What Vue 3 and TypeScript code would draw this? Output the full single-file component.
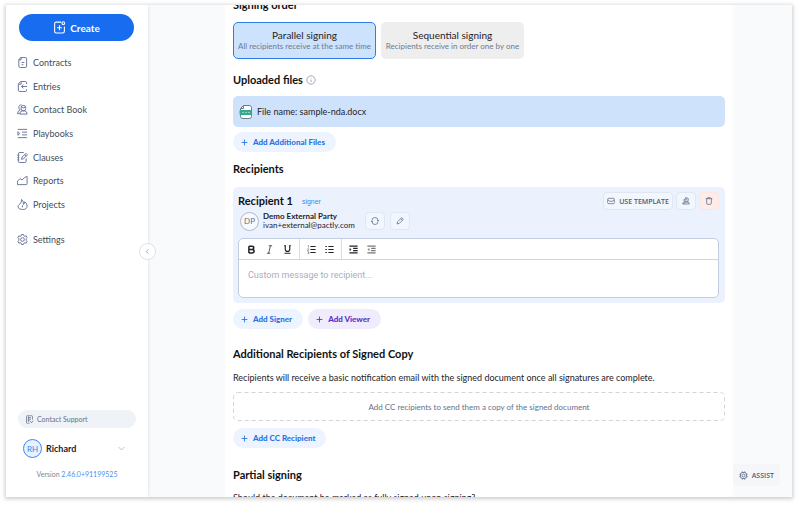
<script setup lang="ts">
import { ref } from 'vue'

interface NavItem {
  label: string
  icon: string[]
}

const nav: NavItem[] = [
  { label: 'Contracts', icon: ['M8 1h10q3 0 3 3v16q0 3-3 3H7q-3 0-3-3V6z', 'M9 1v5H4', 'M10 12h6M10 17h4'] },
  { label: 'Entries', icon: ['M21 7V4q0-3-3-3H8L3 6v14q0 3 3 3h12q3 0 3-3v-2', 'M9 1v6H3', 'M22 12H10M14 8l-4 4 4 4'] },
  { label: 'Contact Book', icon: ['M14 3a5 5 0 0 1 5 5v2a5 5 0 0 1-10 0V8a5 5 0 0 1 5-5z', 'M6 22q0-6 5-7h6q5 1 5 7z', 'M10 2a5 5 0 0 0-6 5q0 4 3 6-5 1-6 8h4', 'M10 7q4 3 8 0'] },
  { label: 'Playbooks', icon: ['M2 8v8l4-4zM2 3h20M11 9h11M11 15h11M2 21h20'] },
  { label: 'Clauses', icon: ['M20 14v6q0 3-3 3H6q-3 0-3-3V4q0-3 3-3h9', 'M1 7h4M1 12h4M1 17h4', 'M10 16l1-5 9-8 3 3-9 9zM17 6l3 3'] },
  { label: 'Reports', icon: ['M1 21v-8l6-5 4 3 5-5 6-3v16q0 2-2 2z'] },
  { label: 'Projects', icon: ['M10 1q1 6-4 10-4 3-4 6 1 6 10 6 10 0 10-8 0-5-5-9 0 4-3 6 1-7-4-11z', 'M12 14v4'] },
]

const gear =
  'M10 1h4l1 3 2 1 3-1 2 4-2 2v4l2 2-2 4-3-1-2 1-1 3h-4l-1-3-2-1-3 1-2-4 2-2v-4L2 8l2-4 3 1 2-1z'

const order = ref<'parallel' | 'sequential'>('parallel')
const message = ref('')
</script>

<template>
  <div class="window">
    <aside class="sidebar">
      <button class="create" type="button">
        <svg class="ico create-ico" viewBox="0 0 24 24"><path d="M15 2H6Q3 2 3 5v14q0 3 3 3h12q3 0 3-3V10M12 8v9M7.500 12.500h9" /><circle cx="19" cy="4" r="2.500" /></svg>
        <span>Create</span>
      </button>
      <nav class="nav">
        <div class="nav-list">
          <a v-for="item in nav" :key="item.label" href="#" class="nav-link">
            <svg class="ico" viewBox="0 0 24 24"><path v-for="d in item.icon" :key="d" :d="d" /></svg>
            <span>{{ item.label }}</span>
          </a>
        </div>
        <a href="#" class="nav-link settings">
          <svg class="ico" viewBox="0 0 24 24"><path :d="gear" /><circle cx="12" cy="12" r="4" /></svg>
          <span>Settings</span>
        </a>
      </nav>
      <div class="foot">
        <a href="#" class="support">
          <svg class="ico" viewBox="0 0 24 24"><path d="M20 12V4q0-2-2-2H6Q4 2 4 4v16q0 2 2 2h6M8 7h8M8 11h8M8 15h4M14 16l3 5 5-6M9 4v14" /></svg>
          <span>Contact Support</span>
        </a>
        <button class="user" type="button">
          <span class="avatar blue">RH</span>
          <span class="user-name">Richard</span>
          <svg class="ico chev" viewBox="0 0 24 24"><path d="M2 7l10 10L22 7" /></svg>
        </button>
        <p class="version">Version <a href="#">2.46.0+91199525</a></p>
      </div>
      <button class="collapse" type="button" aria-label="Collapse">
        <svg class="ico" viewBox="0 0 24 24"><path d="M15 5l-7 7 7 7" /></svg>
      </button>
    </aside>

    <main class="main">
      <div class="panel">
        <h2 class="first">Signing order</h2>
        <div class="orders">
          <button type="button" class="order" :class="{ on: order === 'parallel' }" @click="order = 'parallel'">
            <span class="order-title">Parallel signing</span>
            <span class="order-sub">All recipients receive at the same time</span>
          </button>
          <button type="button" class="order" :class="{ on: order === 'sequential' }" @click="order = 'sequential'">
            <span class="order-title">Sequential signing</span>
            <span class="order-sub">Recipients receive in order one by one</span>
          </button>
        </div>

        <h2 class="files-title">
          Uploaded files
          <svg class="ico info" viewBox="0 0 24 24"><circle cx="12" cy="12" r="10" /><path d="M12 11v6M12 6.500v1.500" /></svg>
        </h2>
        <div class="file">
          <svg class="file-ico" viewBox="0 0 14 14">
            <path d="M4.500 0.500H10q2.500 0 2.500 2v9q0 2-2.500 2H4q-2.500 0-2.500-2v-8z" fill="#fff" stroke="#6d7f8c" />
            <path d="M4.500 0.500v3h-3" fill="none" stroke="#6d7f8c" />
            <rect x="0.500" y="5" width="12" height="5" rx="1" fill="#3aa791" />
            <path d="M3 7.500h8" stroke="#8fd3c4" stroke-dasharray="2 1" />
          </svg>
          <span>File name: sample-nda.docx</span>
        </div>
        <button type="button" class="pill"><svg class="ico" viewBox="0 0 24 24"><path d="M12 2v20M2 12h20" /></svg>Add Additional Files</button>

        <h2 class="recipients-title">Recipients</h2>
        <section class="card">
          <div class="card-head">
            <h3>Recipient 1</h3>
            <span class="role">signer</span>
            <div class="actions">
              <button type="button" class="tool template">
                <svg class="ico" viewBox="0 0 24 24"><rect x="2" y="4" width="20" height="16" rx="3" /><path d="M3 9l6 4h6l6-4" /></svg>
                USE TEMPLATE
              </button>
              <button type="button" class="tool" aria-label="Contact">
                <svg class="ico" viewBox="0 0 24 24"><path d="M9 3h7q3 0 3 4v3q0 5-5 5t-5-5V7q0-4 4-4M6 21q0-5 5-6h6q5 1 5 6zM7 6q-3 5 1 8-5 1-6 7h4M11 8l6 1" /></svg>
              </button>
              <button type="button" class="tool danger" aria-label="Delete">
                <svg class="ico" viewBox="0 0 24 24"><path d="M5 5v14q0 3 3 3h8q3 0 3-3V5M2 5h20M8 5V2h8v3" /></svg>
              </button>
            </div>
          </div>
          <div class="person">
            <span class="avatar grey">DP</span>
            <div class="who">
              <strong>Demo External Party</strong>
              <span>ivan+external@pactly.com</span>
            </div>
            <button type="button" class="tool pale" aria-label="Swap">
              <svg class="ico" viewBox="0 0 24 24"><path d="M3 11a9 9 0 0 1 18-1M21 13a9 9 0 0 1-18 1M18 9l3 3 3-3M0 15l3-3 3 3" /></svg>
            </button>
            <button type="button" class="tool pale" aria-label="Edit">
              <svg class="ico" viewBox="0 0 24 24"><path d="M3 21l2-7L17 2l5 5L10 19zM14 5l5 5" /></svg>
            </button>
          </div>
          <div class="editor">
            <div class="toolbar">
              <div class="group">
                <button type="button" aria-label="Bold"><svg class="ico bold" viewBox="0 0 24 24"><path d="M5 3v18M5 3h8q5 0 5 4.500T13 12H5M13 12q6 0 6 4.500T13 21H5" /></svg></button>
                <button type="button" aria-label="Italic"><svg class="ico italic" viewBox="0 0 24 24"><path d="M10 2h9M5 22h9M14.500 2l-5 20" /></svg></button>
                <button type="button" aria-label="Underline"><svg class="ico" viewBox="0 0 24 24"><path d="M6 2v9q0 6 6 6t6-6V2M3 2h5M16 2h5M4 22h16" /></svg></button>
              </div>
              <div class="group">
                <button type="button" aria-label="Numbered list"><svg class="ico" viewBox="0 0 24 24"><path d="M9 4h14M9 12h14M9 20h14" /><path class="thin" d="M2 1h2v6M1 10h4l-4 5h4M1 18h4v5H1M3 20.500h2" /></svg></button>
                <button type="button" aria-label="Bulleted list"><svg class="ico" viewBox="0 0 24 24"><path d="M9 4h14M9 12h14M9 20h14M1 4h4M1 12h4M1 20h4" /></svg></button>
              </div>
              <div class="group">
                <button type="button" aria-label="Indent"><svg class="ico" viewBox="0 0 24 24"><path d="M1 3h22M11 9h12M11 15h12M1 21h22" /><path class="solid" d="M2 9l4 3-4 3z" /></svg></button>
                <button type="button" aria-label="Outdent" class="dim"><svg class="ico" viewBox="0 0 24 24"><path d="M1 3h22M11 9h12M11 15h12M1 21h22" /><path class="solid" d="M6 9l-4 3 4 3z" /></svg></button>
              </div>
            </div>
            <textarea v-model="message" aria-label="Message" placeholder="Custom message to recipient..."></textarea>
          </div>
        </section>
        <div class="row">
          <button type="button" class="pill"><svg class="ico" viewBox="0 0 24 24"><path d="M12 2v20M2 12h20" /></svg>Add Signer</button>
          <button type="button" class="pill violet"><svg class="ico" viewBox="0 0 24 24"><path d="M12 2v20M2 12h20" /></svg>Add Viewer</button>
        </div>

        <h2 class="copy-title">Additional Recipients of Signed Copy</h2>
        <p class="text">Recipients will receive a basic notification email with the signed document once all signatures are complete.</p>
        <div class="empty">
          <svg class="dash" aria-hidden="true"><rect x="0.500" y="0.500" rx="4" /></svg>
          Add CC recipients to send them a copy of the signed document
        </div>
        <button type="button" class="pill">
          <svg class="ico" viewBox="0 0 24 24"><path d="M12 2v20M2 12h20" /></svg>Add CC Recipient
        </button>

        <h2 class="partial-title">Partial signing</h2>
        <p class="text">Should the document be marked as fully signed upon signing?</p>
      </div>
      <button type="button" class="assist">
        <svg class="ico" viewBox="0 0 24 24"><rect x="4" y="4" width="16" height="16" rx="5" /><circle cx="12" cy="12" r="4" /><path d="M9 1v3M15 1v3M9 20v3M15 20v3M1 9h3M1 15h3M20 9h3M20 15h3" /></svg>
        ASSIST
      </button>
    </main>
  </div>
</template>

<style>
body {
  background: #fff;
}
</style>

<style scoped>
* {
  box-sizing: border-box;
}
button {
  font: inherit;
  color: inherit;
  border: 0;
  padding: 0;
  background: none;
  cursor: pointer;
}
a {
  color: inherit;
  text-decoration: none;
}
h2,
h3,
p {
  margin: 0;
}
.ico {
  flex: none;
  width: 11px;
  height: 11px;
  fill: none;
  stroke: currentColor;
  stroke-width: 2;
  stroke-linejoin: round;
}
.window {
  display: flex;
  height: calc(100vh - 13px);
  margin: 5px 8px 8px 6px;
  overflow: hidden;
  font-family: Lato, sans-serif;
  font-size: 10px;
  color: #1f2328;
  background: #f8fafc;
  box-shadow: 0 1px 4px 1px rgba(0, 0, 0, 0.2);
}
.sidebar {
  position: relative;
  flex: none;
  display: flex;
  flex-direction: column;
  width: 142px;
  padding: 9px 12px 18px 11px;
  background: #fff;
  box-shadow: 0 0 3px rgba(30, 50, 80, 0.15);
}
.create {
  display: flex;
  align-items: center;
  justify-content: center;
  gap: 4px;
  height: 27px;
  margin: 0 2px;
  border-radius: 14px;
  background: #176cf0;
  color: #fff;
  font-size: 10px;
  font-weight: 700;
}
.create-ico {
  width: 13px;
  height: 13px;
}
.nav {
  padding-top: 10px;
}
.nav-list {
  display: grid;
  grid-auto-rows: 1fr;
  height: 165px;
}
.nav-link {
  display: flex;
  align-items: center;
  gap: 5px;
  font-size: 9px;
  color: #454d58;
}
.nav-link .ico {
  color: #5f6f93;
}
.settings {
  height: 24px;
  margin-top: 11px;
}
.foot {
  margin-top: auto;
  padding-left: 1px;
}
.support {
  display: flex;
  align-items: center;
  gap: 3px;
  height: 18px;
  padding: 0 7px;
  border-radius: 9px;
  background: #eff2f6;
  color: #66718a;
  font-size: 7px;
}
.support .ico {
  width: 9px;
  height: 9px;
}
.user {
  display: flex;
  align-items: center;
  gap: 4px;
  width: 100%;
  height: 29px;
  margin-top: 6px;
  padding: 0 11px 0 5px;
  font-size: 9px;
  font-weight: 700;
}
.user-name {
  flex: 1;
  text-align: left;
}
.chev {
  width: 7px;
  height: 7px;
  color: #8b95a5;
}
.avatar {
  flex: none;
  display: grid;
  place-items: center;
  width: 19px;
  height: 19px;
  border: 1px solid;
  border-radius: 50%;
  font-size: 8px;
  font-weight: 400;
}
.blue {
  color: #3f86ea;
  background: #e8f2ff;
}
.grey {
  color: #66718a;
  border-color: #b0b7c8;
  background: #f8faff;
}
.version {
  margin-top: 6px;
  font-size: 7px;
  line-height: 10px;
  text-align: center;
  color: #7c8798;
}
.version a {
  color: #4a90ee;
}
.collapse {
  position: absolute;
  right: -8px;
  bottom: 237px;
  display: grid;
  place-items: center;
  width: 17px;
  height: 17px;
  border: 1px solid #dde1e8;
  border-radius: 50%;
  background: #fff;
  color: #68748a;
}
.collapse .ico {
  width: 7px;
  height: 7px;
}
.main {
  flex: 1;
  min-width: 0;
  padding: 0 59px 0 77px;
}
.panel {
  height: 100%;
  overflow: hidden;
  padding: 0 8px;
  background: #fff;
}
h2 {
  font-size: 11px;
  line-height: 16px;
  font-weight: 700;
  color: #111;
}
.first {
  margin: -8px 0 9px;
}
.orders {
  display: flex;
  gap: 5px;
}
.order {
  display: flex;
  flex-direction: column;
  align-items: center;
  justify-content: center;
  width: 143px;
  height: 37px;
  border-radius: 5px;
  background: #eee;
}
.order.on {
  border: 1px solid #2f7de6;
  background: #cde2fc;
}
.order-title {
  font-size: 10px;
  line-height: 12px;
}
.order-sub {
  font-size: 8px;
  line-height: 11px;
  color: #6f7a8c;
}
.files-title {
  display: flex;
  align-items: center;
  gap: 3px;
  margin: 13px 0 8px;
}
.info {
  width: 10px;
  height: 10px;
  color: #8d98ad;
}
.file {
  display: flex;
  align-items: center;
  gap: 4px;
  height: 31px;
  margin-bottom: 5px;
  padding: 0 6px;
  border-radius: 5px;
  background: #cfe2fb;
  font-size: 9px;
}
.file-ico {
  width: 14px;
  height: 14px;
}
.pill {
  display: inline-flex;
  align-items: center;
  gap: 5px;
  height: 20px;
  padding: 0 11px 0 8px;
  border-radius: 10px;
  background: #edf4ff;
  color: #2a74e2;
  font-size: 8px;
  font-weight: 900;
  vertical-align: top;
}
.pill .ico {
  width: 7px;
  height: 7px;
  stroke-width: 3;
}
.violet {
  background: #f1ecfd;
  color: #5734c6;
}
.recipients-title {
  margin: 9px 0 10px;
}
.card {
  height: 116px;
  margin-bottom: 6px;
  padding: 5px 6px 6px 5px;
  border-radius: 5px;
  background: #ebf2fe;
}
.card-head {
  display: flex;
  align-items: center;
  height: 18px;
}
h3 {
  font-size: 11px;
  line-height: 16px;
  font-weight: 700;
  color: #111;
}
.role {
  margin-left: 9px;
  font-family: "Liberation Sans", sans-serif;
  font-size: 7px;
  color: #3b8bea;
}
.actions {
  display: flex;
  gap: 3px;
  margin-left: auto;
}
.tool {
  display: flex;
  align-items: center;
  justify-content: center;
  gap: 4px;
  width: 20px;
  height: 18px;
  border: 1px solid #e0e7f2;
  border-radius: 4px;
  background: #f2f6fd;
  color: #4f5b73;
}
.tool .ico {
  width: 8px;
  height: 8px;
}
.template {
  width: 70px;
  font-family: "Open Sans", sans-serif;
  font-size: 7px;
  font-weight: 600;
}
.danger {
  border-color: #fde5e2;
  background: #fdecea;
}
.person {
  display: flex;
  align-items: center;
  height: 22px;
  margin-bottom: 6px;
  padding-left: 2px;
}
.who {
  display: flex;
  flex-direction: column;
  width: 100px;
  margin-left: 4px;
  font-size: 8px;
  line-height: 9px;
}
.pale {
  margin-left: 2px;
  background: #f2f7ff;
}
.pale + .pale {
  margin-left: 5px;
}
.editor {
  display: flex;
  flex-direction: column;
  height: 60px;
  border: 1px solid #c3cde0;
  border-radius: 5px;
  background: #fff;
}
.toolbar {
  display: flex;
  height: 21px;
  border-bottom: 1px solid #cfd5de;
}
.group {
  display: flex;
  align-items: center;
  padding: 0 3px;
}
.group + .group {
  padding-left: 2px;
  border-left: 1px solid #d8dce3;
}
.group button {
  display: grid;
  place-items: center;
  width: 18px;
  height: 18px;
}
.group .ico {
  width: 9px;
  height: 9px;
  stroke-width: 3;
}
.group .bold {
  stroke-width: 4;
}
.group .italic {
  stroke-width: 2;
}
.group .thin {
  stroke-width: 1;
}
.group .solid {
  fill: currentColor;
  stroke-width: 1;
}
.dim {
  color: #777;
}
textarea {
  flex: 1;
  width: 100%;
  min-height: 0;
  padding: 9px;
  border: 0;
  border-radius: 5px;
  outline: 0;
  resize: none;
  background: none;
  font: 9px/12px Roboto, sans-serif;
  color: #1f2328;
}
textarea::placeholder {
  color: #a8afbc;
}
.row {
  display: flex;
  gap: 5px;
}
.copy-title {
  margin: 17px 0 8px;
}
.text {
  font-size: 9px;
  line-height: 16px;
}
.empty {
  position: relative;
  display: grid;
  place-items: center;
  height: 29px;
  margin: 6px 0 7px;
  font-size: 8px;
  color: #66718a;
}
.dash {
  position: absolute;
  inset: 0;
  width: 100%;
  height: 100%;
}
.dash rect {
  width: calc(100% - 1px);
  height: calc(100% - 1px);
  fill: none;
  stroke: #d0d5dc;
  stroke-dasharray: 4 3;
}
.partial-title {
  margin: 19px 0 7px;
}
.assist {
  position: fixed;
  right: 20px;
  bottom: 19px;
  display: flex;
  align-items: center;
  gap: 4px;
  height: 22px;
  padding: 0 6px;
  border-radius: 4px;
  background: #f4f6fa;
  color: #4f5b7c;
  font-family: "Open Sans", sans-serif;
  font-size: 7px;
  font-weight: 600;
}
.assist .ico {
  width: 9px;
  height: 9px;
}
</style>
